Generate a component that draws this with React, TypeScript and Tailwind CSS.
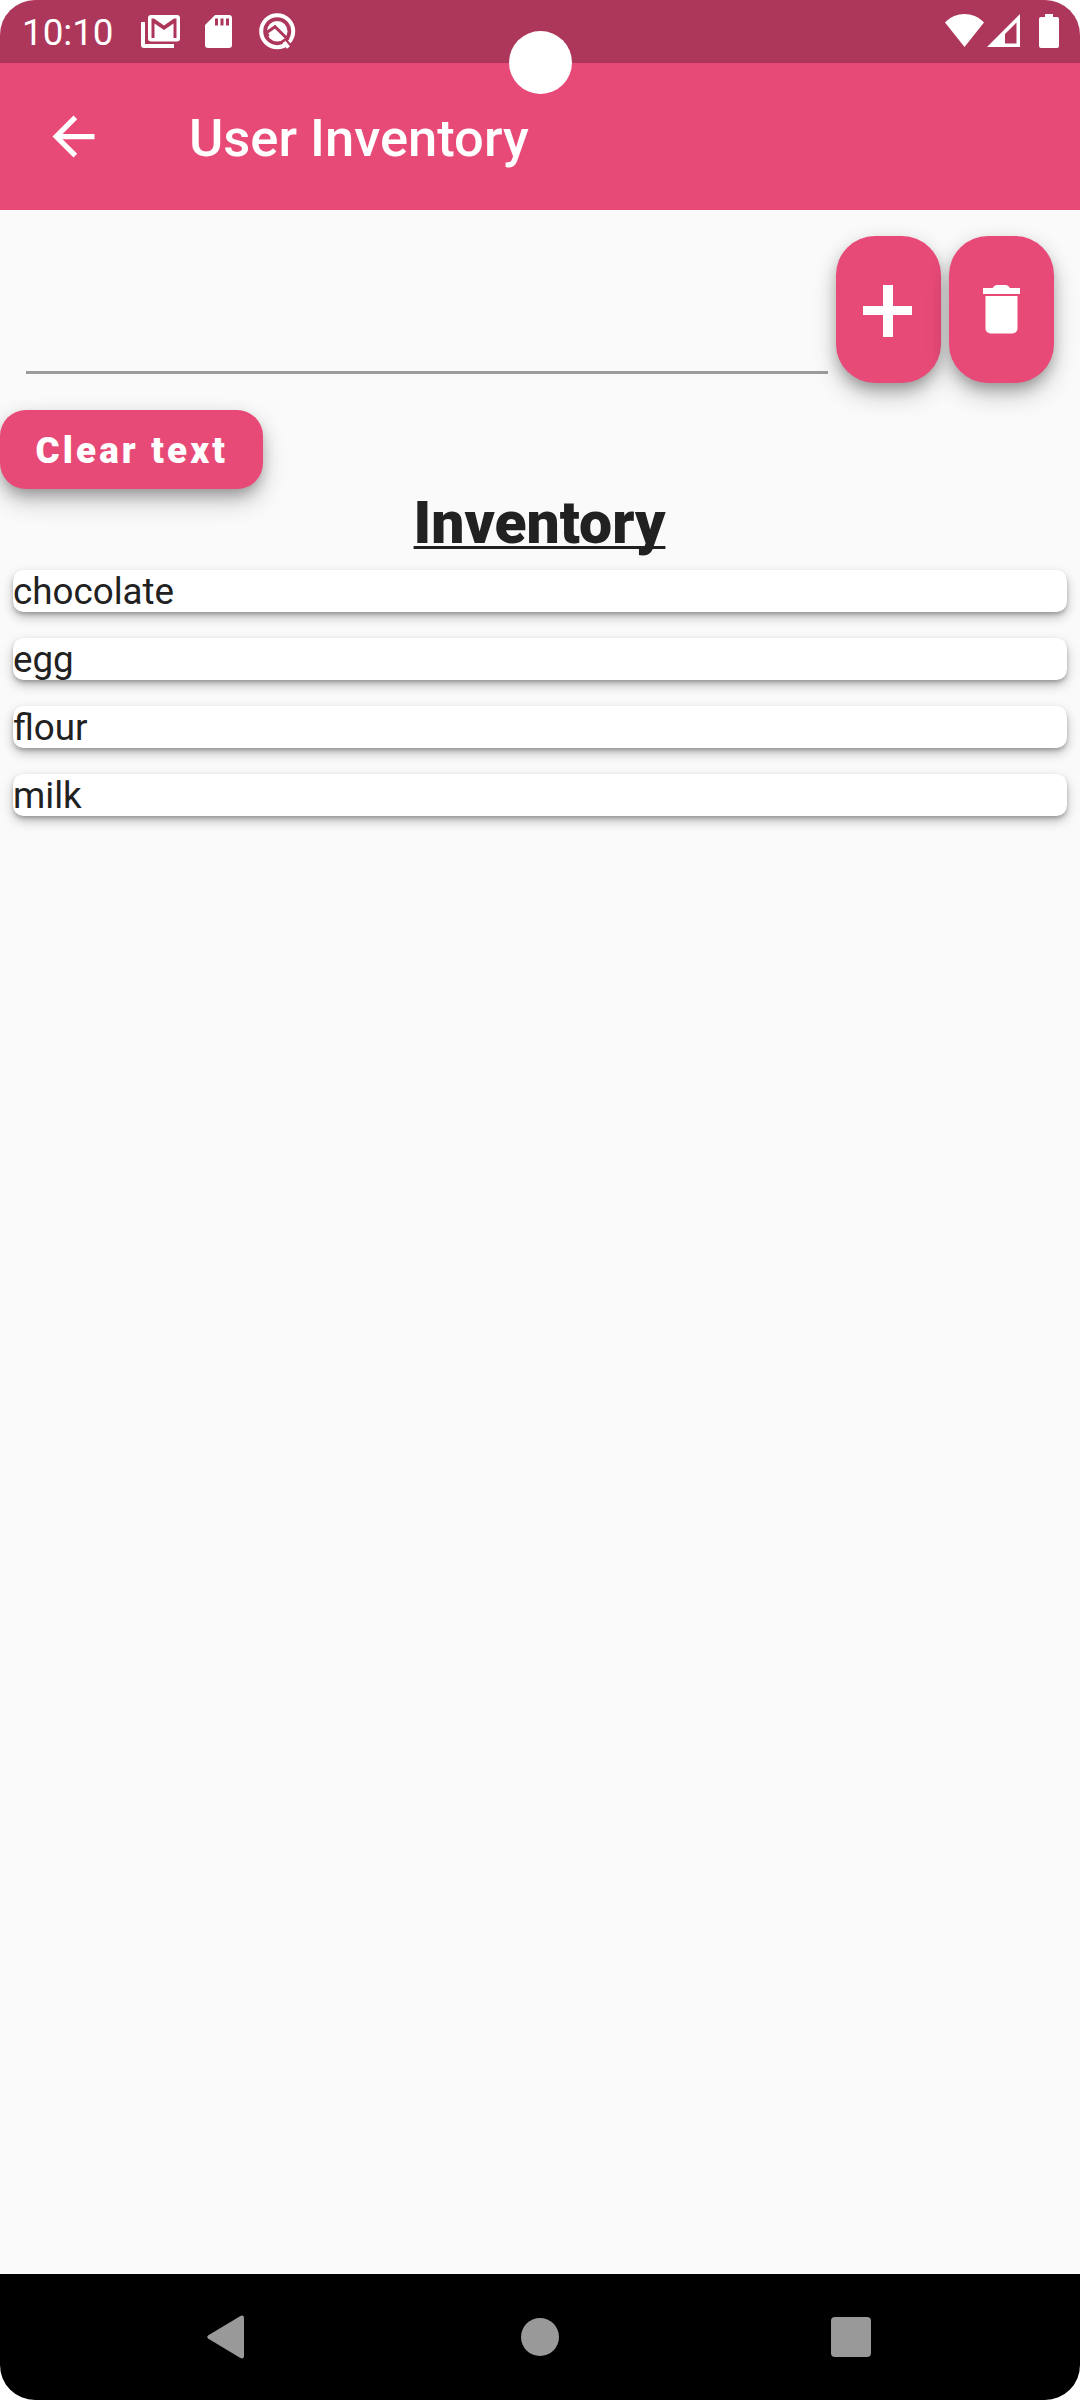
import React from "react";

function StatusBar() {
  return (
    <div className="flex h-[63px] shrink-0 items-start bg-[#ad375a] text-white">
      <span className="ml-[22px] mt-[11px] w-[93px] whitespace-nowrap text-[36.75px] leading-[43px]">10:10</span>
      <svg className="ml-[26px] mt-[15px]" width="39" height="33" viewBox="0 0 39 33" fill="currentColor">
        <path d="M0 7h4v22h29v4H3a3 3 0 0 1-3-3z" />
        <path fillRule="evenodd" d="M10 0h26a3 3 0 0 1 3 3v20.500a3 3 0 0 1-3 3H10a3 3 0 0 1-3-3V3a3 3 0 0 1 3-3zM10.500 3.500V23h3V8.500l9.500 6.500 9.500-6.500V23h3V3.500h-2.500L23 10.500 13 3.500z" />
      </svg>
      <svg className="ml-[25px] mt-[15px]" width="27" height="33" viewBox="0 0 27 33" fill="currentColor">
        <path fillRule="evenodd" d="M10 0h14a3 3 0 0 1 3 3v27a3 3 0 0 1-3 3H3a3 3 0 0 1-3-3V10zM10 3.500v7h3v-7zM15.500 3.500v7h3v-7zM21 3.500v7h3v-7z" />
      </svg>
      <svg className="ml-[27px] mt-[13px]" width="37" height="37" viewBox="0 0 37 37" fill="none" stroke="currentColor">
        <circle cx="18.200" cy="18.200" r="16" strokeWidth="4" />
        <circle cx="18.200" cy="18.200" r="10.300" fill="currentColor" stroke="none" />
        <path d="M9.500 23L7 20l9-6.200L29.500 27" stroke="#ad375a" strokeWidth="3" />
        <path d="M25 29L29.500 34.500" strokeWidth="4" />
        <path d="M27.500 27.500L33.500 34.500" stroke="#ad375a" strokeWidth="2" />
      </svg>
      <svg className="ml-auto mt-[14px]" width="39" height="33" viewBox="0 0 39 33" fill="currentColor">
        <path d="M0 8.500C11-2.800 28-2.800 39 8.500L19.500 33z" />
      </svg>
      <svg className="ml-[3px] mt-[14px]" width="33" height="33" viewBox="0 0 33 33" fill="currentColor">
        <path fillRule="evenodd" d="M33 0v33H0zM29.500 8.500L18 20v9.500h11.500z" />
      </svg>
      <svg className="ml-[19px] mr-[21px] mt-[14px]" width="20" height="34" viewBox="0 0 20 34" fill="currentColor">
        <path d="M6 0h8v3h4a2 2 0 0 1 2 2v27a2 2 0 0 1-2 2H2a2 2 0 0 1-2-2V5a2 2 0 0 1 2-2h4z" />
      </svg>
    </div>
  );
}

function AppBar() {
  return (
    <header className="flex h-[147px] shrink-0 items-center bg-[#e84a78] pl-[42px] text-white">
      <svg width="63" height="63" viewBox="0 0 24 24" fill="currentColor" aria-label="Back">
        <path d="M20 11H7.830l5.590-5.590L12 4l-8 8 8 8 1.410-1.410L7.830 13H20v-2z" />
      </svg>
      <h1 className="ml-[84px] mt-[3px] whitespace-nowrap text-[52.5px] font-medium leading-[62px]">User Inventory</h1>
    </header>
  );
}

const raised =
  "shadow-[0_8px_13px_-3px_rgba(0,0,0,0.22),0_13px_24px_0_rgba(0,0,0,0.2),0_3px_20px_0_rgba(0,0,0,0.08)]";

function InputRow() {
  const button = `h-[147px] w-[105px] rounded-[39px] bg-[#e84a78] text-white ${raised}`;
  return (
    <div className="flex h-[147px] px-[26px]">
      <div className="mb-[9px] w-[802px] border-b-[3px] border-[#9b9b9b]" />
      <button className={`ml-2 ${button}`} aria-label="Add">
        <svg width="105" height="147" viewBox="0 0 105 147" fill="currentColor">
          <path d="M47 49h10v21h19v9H57v22H47V79H27v-9h20z" />
        </svg>
      </button>
      <button className={`ml-2 ${button}`} aria-label="Delete">
        <svg width="105" height="147" viewBox="0 0 105 147" fill="currentColor">
          <path d="M34 52h9.500q2.200-3 4-3h9.500q2 0 4 3H71v6H34z" />
          <path d="M36.500 60h32v32.500a5 5 0 0 1-5 5h-22a5 5 0 0 1-5-5z" />
        </svg>
      </button>
    </div>
  );
}

const items = ["chocolate", "egg", "flour", "milk"];

function InventoryList() {
  return (
    <ul className="mt-[13px] flex flex-col gap-[26px] px-[13px]">
      {items.map((item) => (
        <li
          key={item}
          className="h-[42px] rounded-[10.5px] bg-white text-[36.75px] leading-[43px] shadow-[0_3px_4px_-1px_rgba(0,0,0,0.22),0_5px_11px_0_rgba(0,0,0,0.25),0_1px_4px_0_rgba(0,0,0,0.06)]"
        >
          {item}
        </li>
      ))}
    </ul>
  );
}

function NavigationBar() {
  return (
    <nav className="flex h-[126px] shrink-0 items-center bg-black text-[#999999]">
      <svg className="ml-[207px]" width="37" height="44" viewBox="0 0 37 44" fill="currentColor">
        <path d="M1 20.500L33 1.200Q37-.8 37 3.500v37q0 4.300-4 2.300L1 23.500q-1.500-1.500 0-3z" />
      </svg>
      <div className="ml-[277px] h-[38px] w-[38px] rounded-full bg-[#999999]" />
      <div className="ml-[272px] h-[40px] w-[40px] rounded-[4px] bg-[#999999]" />
    </nav>
  );
}

export default function App() {
  return (
    <div className="h-[2400px] w-[1080px] bg-white">
      <div className="relative flex h-full flex-col overflow-hidden rounded-[35px] bg-[#fafafa] font-['Roboto',sans-serif] text-[#212121]">
        <StatusBar />
        <AppBar />
        <div className="absolute left-[509px] top-[31px] h-[63px] w-[63px] rounded-full bg-white" />
        <main className="flex-1 pt-[26px]">
          <InputRow />
          <button
            className={`mt-[27px] flex h-[79px] w-[262.5px] items-center whitespace-nowrap rounded-[26px] bg-[#e84a78] pl-[35.5px] pt-[2px] text-[36.75px] font-black leading-[43px] tracking-[3.15px] text-white ${raised}`}
          >
            Clear text
          </button>
          <h2 className="-mt-px pr-px text-center text-[58.8px] font-black leading-[69px]">
            <span className="underline decoration-[3px] underline-offset-[3px] [text-decoration-skip-ink:none]">Inventory</span>
          </h2>
          <InventoryList />
        </main>
        <NavigationBar />
      </div>
    </div>
  );
}
